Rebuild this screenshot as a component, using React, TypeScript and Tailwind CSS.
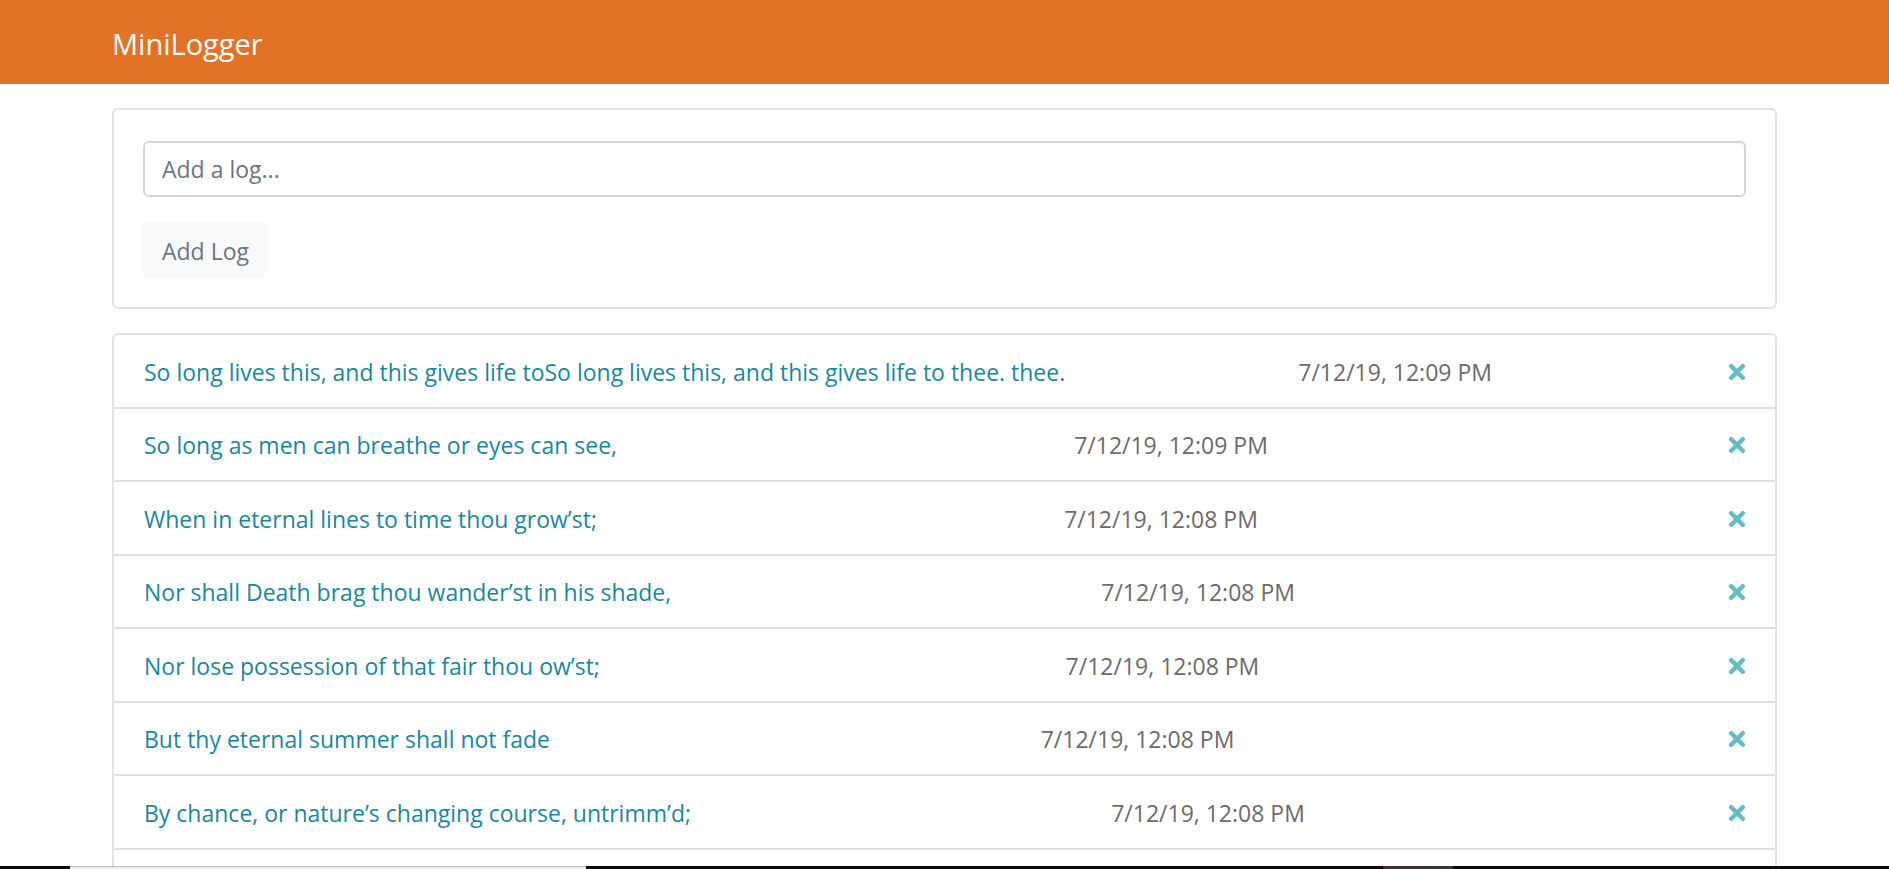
import React, { useState } from 'react';
import { FaTimes } from 'react-icons/fa';

type Log = {
  id: number;
  text: string;
  date: string;
};

const initialLogs: Log[] = [
  { id: 8, text: 'So long lives this, and this gives life toSo long lives this, and this gives life to thee. thee.', date: '7/12/19, 12:09 PM' },
  { id: 7, text: 'So long as men can breathe or eyes can see,', date: '7/12/19, 12:09 PM' },
  { id: 6, text: 'When in eternal lines to time thou grow’st;', date: '7/12/19, 12:08 PM' },
  { id: 5, text: 'Nor shall Death brag thou wander’st in his shade,', date: '7/12/19, 12:08 PM' },
  { id: 4, text: 'Nor lose possession of that fair thou ow’st;', date: '7/12/19, 12:08 PM' },
  { id: 3, text: 'But thy eternal summer shall not fade', date: '7/12/19, 12:08 PM' },
  { id: 2, text: 'By chance, or nature’s changing course, untrimm’d;', date: '7/12/19, 12:08 PM' },
  { id: 1, text: 'And every fair from fair sometime declines,', date: '7/12/19, 12:08 PM' },
];

export default function App() {
  const [logs, setLogs] = useState<Log[]>(initialLogs);
  const [text, setText] = useState('');

  const addLog = () => {
    if (!text.trim()) return;
    const now = new Date();
    const log: Log = {
      id: Date.now(),
      text,
      date: now.toLocaleString('en-US', {
        year: '2-digit',
        month: 'numeric',
        day: 'numeric',
        hour: 'numeric',
        minute: '2-digit',
      }),
    };
    setLogs(prev => [log, ...prev]);
    setText('');
  };

  const removeLog = (id: number) => {
    setLogs(prev => prev.filter(l => l.id !== id));
  };

  return (
    <div className="min-h-screen bg-white font-['Open_Sans',sans-serif] text-[23px]">
      {/* Navbar */}
      <header className="h-[84px] bg-[#e17226]">
        <div className="mx-auto flex h-full w-[1710px] items-center px-[22.5px] pt-[3px]">
          <span className="text-[29px] leading-[45px] text-white">MiniLogger</span>
        </div>
      </header>

      <main className="mx-auto w-[1710px] px-[22.5px] pt-[24px]">
        {/* Add form */}
        <div className="rounded-[6px] border-2 border-[#e2e2e2] px-[29px] pt-[31px] pb-[28px]">
          <input
            type="text"
            value={text}
            onChange={e => setText(e.target.value)}
            onKeyDown={e => e.key === 'Enter' && addLog()}
            placeholder="Add a log..."
            className="block h-[56px] w-full rounded-[6px] border-2 border-[#d0d5da] px-[17px] text-[23px] text-[#495057] placeholder:text-[#6c757d] focus:outline-none"
          />
          <button
            onClick={addLog}
            className="mt-[24px] h-[58px] rounded-[6px] bg-[#f8f9fa] px-[19px] pt-[2px] text-[23px] text-[#6c757d]"
          >
            Add Log
          </button>
        </div>

        {/* Log list */}
        <ul className="mt-[24px] rounded-[6px] border-2 border-[#e2e2e2]">
          {logs.map(log => (
            <li
              key={log.id}
              className="flex items-center justify-between border-b-2 border-[#dfdfdf] px-[30px] pt-[18.5px] pb-[17px] leading-[36px] last:border-b-0"
            >
              <span className="text-[#1a879c]">{log.text}</span>
              <span className="text-[#6e6a67]">{log.date}</span>
              <button onClick={() => removeLog(log.id)} className="-mr-[4px] text-[#62bec2]">
                <FaTimes size={24} />
              </button>
            </li>
          ))}
        </ul>
      </main>

      {/* Taskbar edge */}
      <div className="fixed bottom-0 left-0 flex h-[3px] w-full bg-[#120606]">
        <div className="w-[70px]" />
        <div className="w-[516px] border-t border-[#bdbdbd] bg-[#efefef]" />
        <div className="w-[797px]" />
        <div className="w-[70px] bg-[#3a3131]" />
      </div>
    </div>
  );
}
